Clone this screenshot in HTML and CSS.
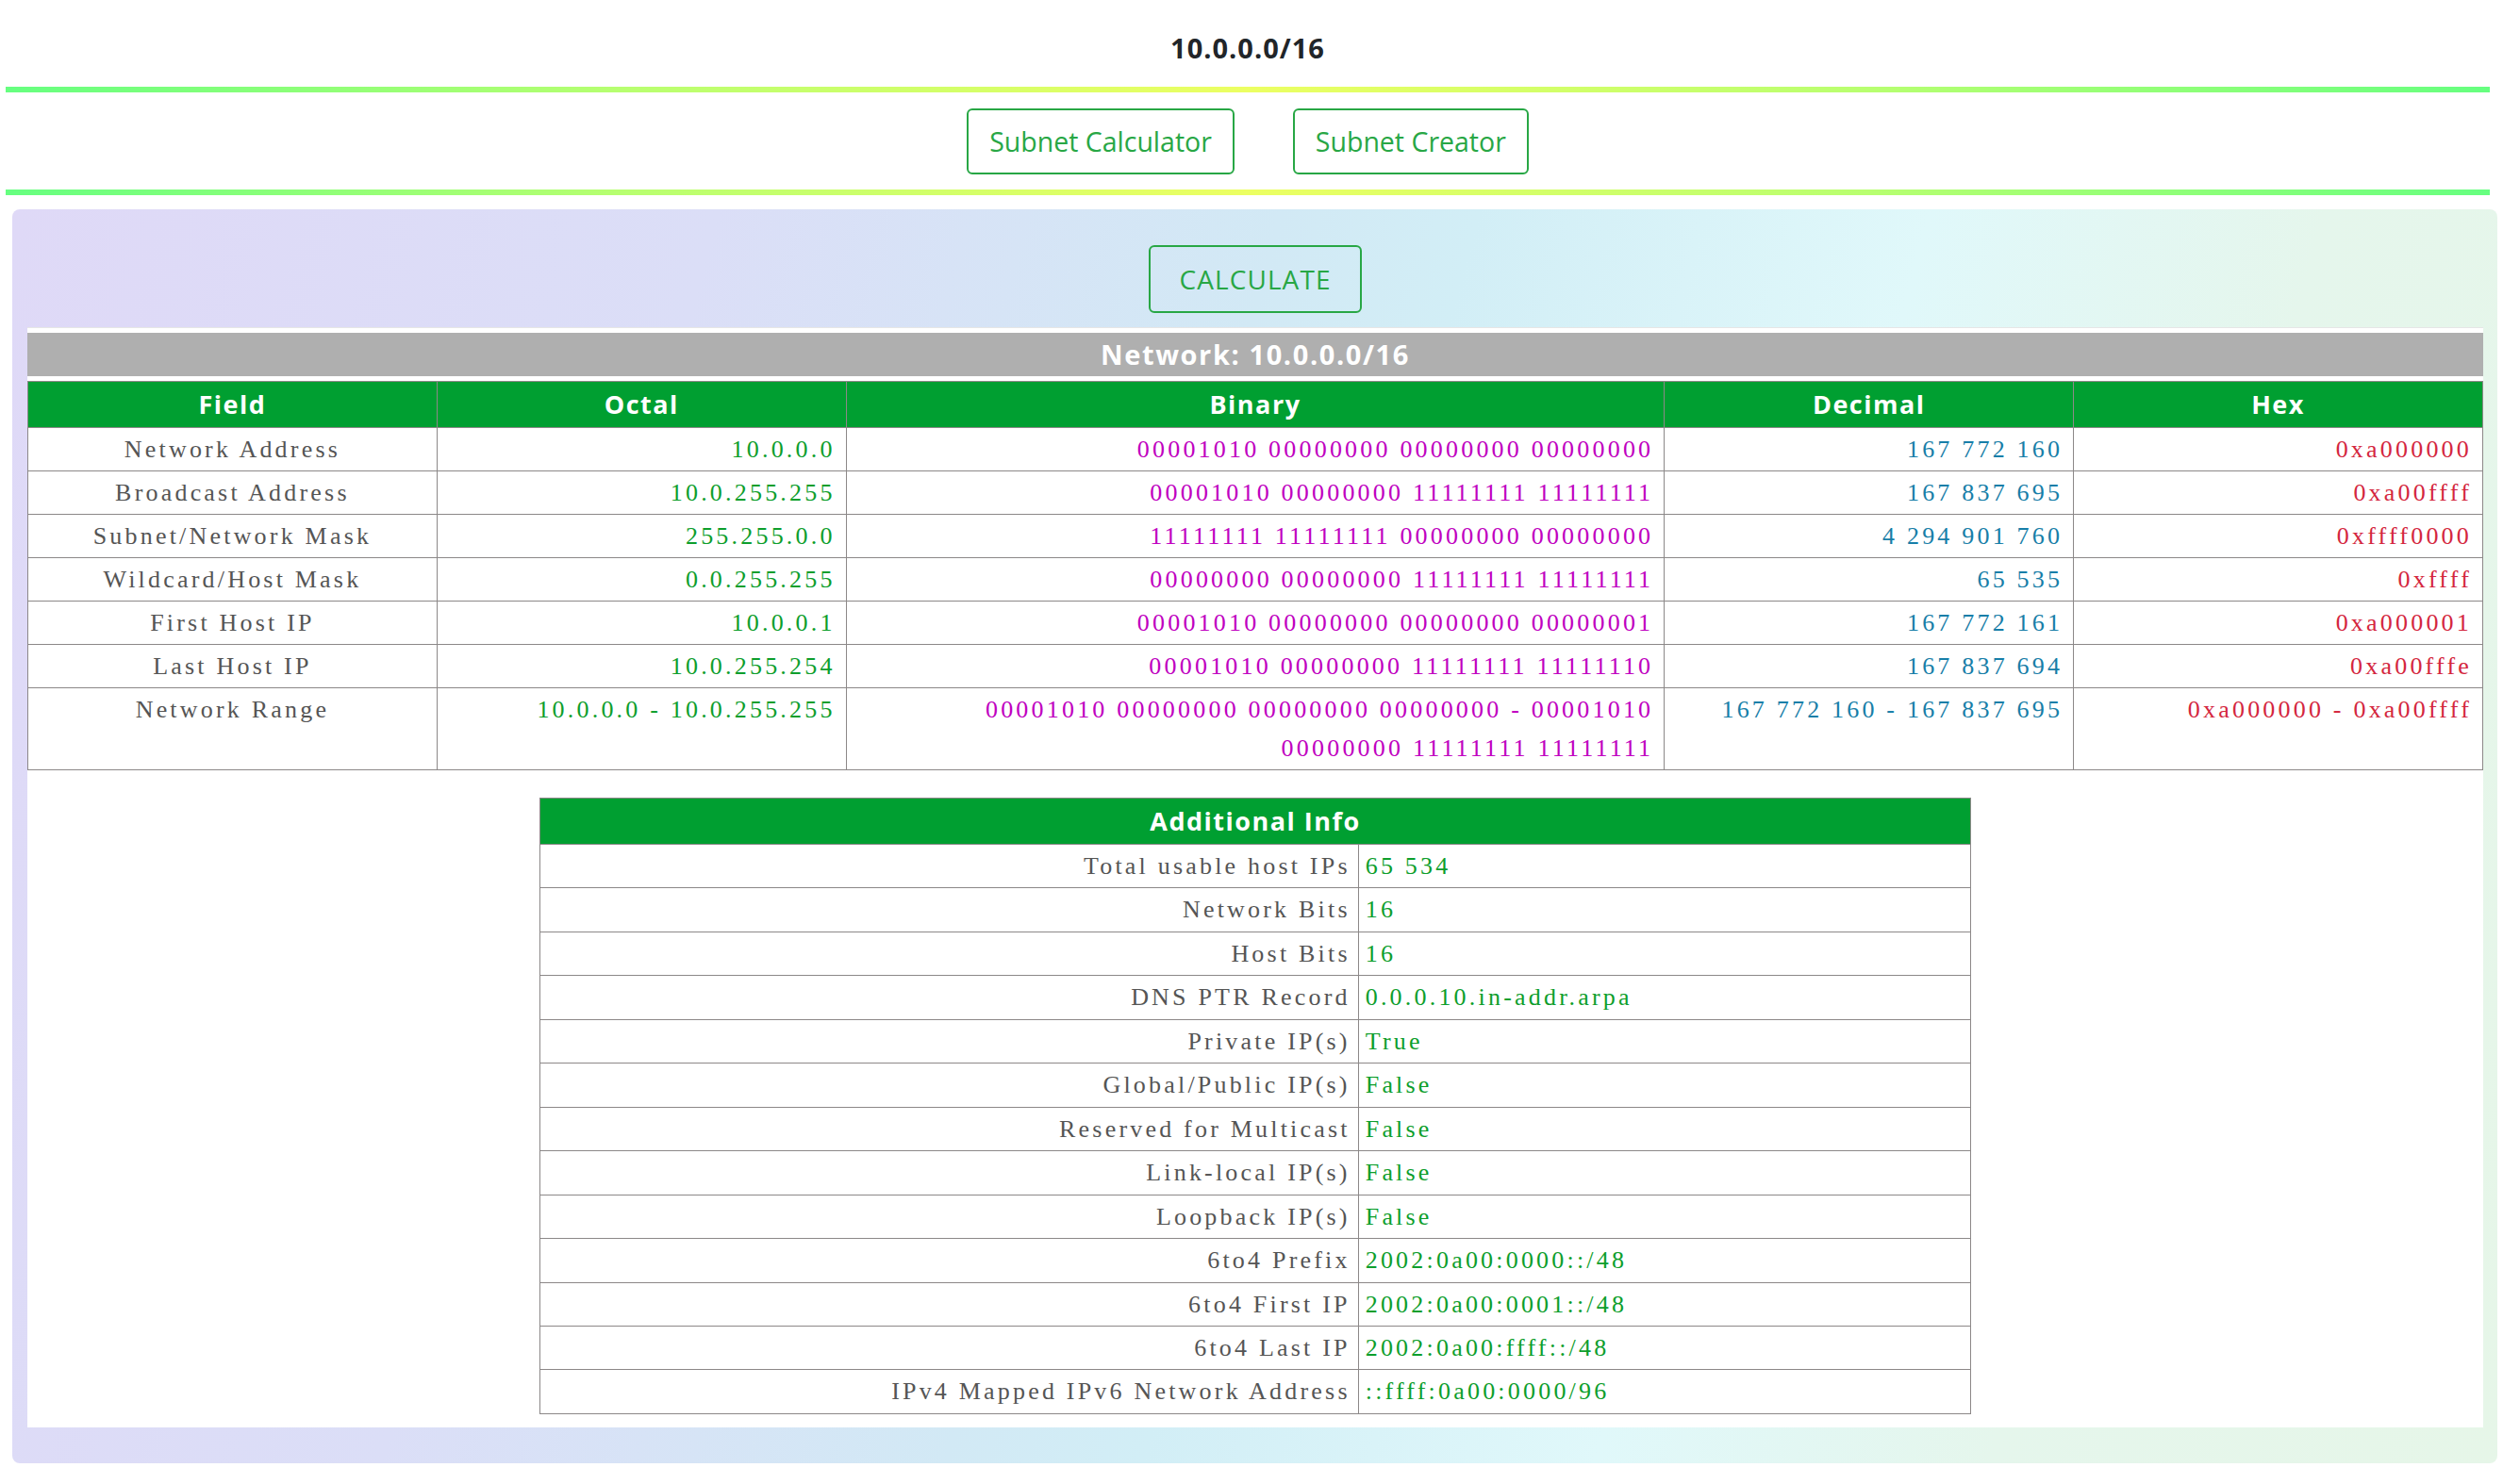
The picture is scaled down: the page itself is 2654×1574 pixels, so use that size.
FILE: index.html
```html
<!DOCTYPE html>
<html lang="en">
<head>
<meta charset="utf-8">
<title>Subnet Calculator - 10.0.0.0/16</title>
<link rel="stylesheet" href="styles.css">
</head>
<body>
<header class="top">
  <h1 class="title">10.0.0.0/16</h1>
  <div class="rule"></div>
  <nav class="nav">
    <a class="nav-btn" href="#">Subnet Calculator</a>
    <a class="nav-btn" href="#">Subnet Creator</a>
  </nav>
  <div class="rule"></div>
</header>

<main class="panel">
  <div class="actions">
    <button class="calc" type="button">CALCULATE</button>
  </div>

  <section class="result">
    <div class="network">Network: 10.0.0.0/16</div>

    <table class="grid main">
      <colgroup>
        <col class="c1"><col class="c1"><col class="c2"><col class="c1"><col class="c1">
      </colgroup>
      <thead>
        <tr><th>Field</th><th>Octal</th><th>Binary</th><th>Decimal</th><th>Hex</th></tr>
      </thead>
      <tbody>
        <tr><td class="lbl">Network Address</td><td class="oct">10.0.0.0</td><td class="bin">00001010 00000000 00000000 00000000</td><td class="dec">167 772 160</td><td class="hex">0xa000000</td></tr>
        <tr><td class="lbl">Broadcast Address</td><td class="oct">10.0.255.255</td><td class="bin">00001010 00000000 11111111 11111111</td><td class="dec">167 837 695</td><td class="hex">0xa00ffff</td></tr>
        <tr><td class="lbl">Subnet/Network Mask</td><td class="oct">255.255.0.0</td><td class="bin">11111111 11111111 00000000 00000000</td><td class="dec">4 294 901 760</td><td class="hex">0xffff0000</td></tr>
        <tr><td class="lbl">Wildcard/Host Mask</td><td class="oct">0.0.255.255</td><td class="bin">00000000 00000000 11111111 11111111</td><td class="dec">65 535</td><td class="hex">0xffff</td></tr>
        <tr><td class="lbl">First Host IP</td><td class="oct">10.0.0.1</td><td class="bin">00001010 00000000 00000000 00000001</td><td class="dec">167 772 161</td><td class="hex">0xa000001</td></tr>
        <tr><td class="lbl">Last Host IP</td><td class="oct">10.0.255.254</td><td class="bin">00001010 00000000 11111111 11111110</td><td class="dec">167 837 694</td><td class="hex">0xa00fffe</td></tr>
        <tr><td class="lbl">Network Range</td><td class="oct">10.0.0.0 - 10.0.255.255</td><td class="bin">00001010 00000000 00000000 00000000 - 00001010<br>00000000 11111111 11111111</td><td class="dec">167 772 160 - 167 837 695</td><td class="hex">0xa000000 - 0xa00ffff</td></tr>
      </tbody>
    </table>

    <table class="grid info">
      <colgroup><col class="ilbl"><col></colgroup>
      <thead>
        <tr><th colspan="2">Additional Info</th></tr>
      </thead>
      <tbody>
        <tr><td class="key">Total usable host IPs</td><td class="val">65 534</td></tr>
        <tr><td class="key">Network Bits</td><td class="val">16</td></tr>
        <tr><td class="key">Host Bits</td><td class="val">16</td></tr>
        <tr><td class="key">DNS PTR Record</td><td class="val">0.0.0.10.in-addr.arpa</td></tr>
        <tr><td class="key">Private IP(s)</td><td class="val">True</td></tr>
        <tr><td class="key">Global/Public IP(s)</td><td class="val">False</td></tr>
        <tr><td class="key">Reserved for Multicast</td><td class="val">False</td></tr>
        <tr><td class="key">Link-local IP(s)</td><td class="val">False</td></tr>
        <tr><td class="key">Loopback IP(s)</td><td class="val">False</td></tr>
        <tr><td class="key">6to4 Prefix</td><td class="val">2002:0a00:0000::/48</td></tr>
        <tr><td class="key">6to4 First IP</td><td class="val">2002:0a00:0001::/48</td></tr>
        <tr><td class="key">6to4 Last IP</td><td class="val">2002:0a00:ffff::/48</td></tr>
        <tr><td class="key">IPv4 Mapped IPv6 Network Address</td><td class="val">::ffff:0a00:0000/96</td></tr>
      </tbody>
    </table>
  </section>
</main>
</body>
</html>
```

FILE: styles.css
```css
* { box-sizing: border-box; }

html, body {
  margin: 0;
  padding: 0;
  background: #ffffff;
}

body {
  font-family: "Open Sans", "Noto Sans", "Liberation Sans", sans-serif;
  color: #212529;
}

/* ---------- top header ---------- */
.top {
  margin: 0 14px 0 6px;
}

.title {
  margin: 0 0 23px;
  padding-top: 33px;
  font-size: 29px;
  line-height: 36px;
  font-weight: 700;
  letter-spacing: 1px;
  text-align: center;
  color: #212529;
}

.rule {
  height: 6px;
  background: linear-gradient(90deg, #66ff80 0%, #b8ff70 25%, #ecff62 50%, #b8ff70 75%, #66ff80 100%);
}

.nav {
  display: flex;
  justify-content: center;
  gap: 62px;
  padding: 17px 0 16px;
}

.nav-btn {
  display: block;
  padding: 11px 22px;
  font-size: 28.5px;
  line-height: 44px;
  color: #28a745;
  text-decoration: none;
  border: 2px solid #28a745;
  border-radius: 6px;
  background: #ffffff;
}

/* ---------- main panel ---------- */
.panel {
  display: block;
  margin: 15px 6px 0 13px;
  padding: 38px 15px 38px 16px;
  border-radius: 8px;
  background: linear-gradient(105deg, #dfd9f7 0%, #dbdef7 25%, #d2e9f5 45%, #d2eef6 52%, #e0f8fa 68%, #e5f6ec 82%, #e6f6e8 100%);
}

.actions {
  display: flex;
  justify-content: center;
  margin-bottom: 15px;
}

.calc {
  display: block;
  margin: 0;
  padding: 12px 30px;
  font-family: "Open Sans", "Noto Sans", "Liberation Sans", sans-serif;
  font-size: 28px;
  line-height: 44px;
  letter-spacing: 1.1px;
  color: #28a745;
  background: transparent;
  border: 2px solid #28a745;
  border-radius: 6px;
}

.result {
  background: #ffffff;
  border-top: 1px solid #e6e6e6;
  padding: 5px 0 14px;
}

.network {
  height: 46px;
  line-height: 46px;
  background: #afafaf;
  color: #ffffff;
  font-size: 29px;
  font-weight: 700;
  letter-spacing: 1.6px;
  text-align: center;
}

/* ---------- tables ---------- */
.grid {
  border-collapse: collapse;
  table-layout: fixed;
  font-family: "Liberation Serif", "Times New Roman", serif;
  font-size: 26px;
  letter-spacing: 3.2px;
}

.grid th {
  background: #009f31;
  color: #ffffff;
  font-family: "Open Sans", "Noto Sans", "Liberation Sans", sans-serif;
  font-size: 27px;
  font-weight: 700;
  letter-spacing: 1.5px;
  line-height: 44px;
  padding: 2px 11px 2px;
  border: 1px solid #8c8888;
  text-align: center;
}

.grid td {
  border: 1px solid #8c8888;
  padding: 2px 11px 2px;
  line-height: 41px;
  vertical-align: top;
}

.main {
  width: 100%;
  margin-top: 5px;
}

.main .c1 { width: 16.6667%; }
.main .c2 { width: 33.3333%; }

.lbl {
  text-align: center;
  color: #555555;
}

.oct { text-align: right; color: #0d9e2c; }
.bin { text-align: right; color: #c000c0; }
.dec { text-align: right; color: #177ea8; }
.hex { text-align: right; color: #d4263e; }

.info {
  width: 58.3%;
  margin: 29px auto 0;
}

.info td {
  line-height: 41.46px;
}

.info .ilbl { width: 57.2%; }

.key {
  text-align: right;
  color: #555555;
  padding-right: 8px !important;
}

.val {
  text-align: left;
  color: #0d9e2c;
  padding-left: 7px !important;
}
```
